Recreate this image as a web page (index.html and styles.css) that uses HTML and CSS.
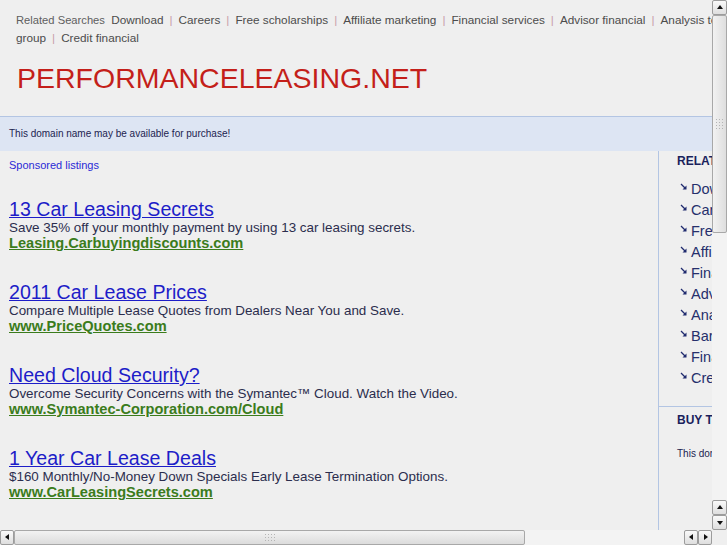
FILE: index.html
```html
<!DOCTYPE html>
<html>
<head>
<meta charset="utf-8">
<title>performanceleasing.net</title>
<link rel="stylesheet" href="styles.css">
</head>
<body>
<div class="screen">
  <div class="viewport">
    <div class="page">
      <div class="related">
        <span class="label">Related Searches</span>
        <a href="#">Download</a><span class="sep">|</span><a href="#">Careers</a><span class="sep">|</span><a href="#">Free scholarships</a><span class="sep">|</span><a href="#">Affiliate marketing</a><span class="sep">|</span><a href="#">Financial services</a><span class="sep">|</span><a href="#">Advisor financial</a><span class="sep">|</span><a href="#">Analysis tools</a><span class="sep">|</span><a href="#">Barclays</a><span class="sep">|</span><a href="#">Financial</a> <a href="#">group</a><span class="sep">|</span><a href="#">Credit financial</a>
      </div>
      <h1 class="domain">PERFORMANCELEASING.NET</h1>
      <div class="band">This domain name may be available for purchase!</div>
      <div class="main">
        <div class="listings">
          <a class="sponsored" href="#">Sponsored listings</a>
          <div class="ads">
            <div class="ad">
              <a class="ad-title" href="#">13 Car Leasing Secrets</a>
              <div class="ad-desc">Save 35% off your monthly payment by using 13 car leasing secrets.</div>
              <a class="ad-url" href="#">Leasing.Carbuyingdiscounts.com</a>
            </div>
            <div class="ad">
              <a class="ad-title" href="#">2011 Car Lease Prices</a>
              <div class="ad-desc">Compare Multiple Lease Quotes from Dealers Near You and Save.</div>
              <a class="ad-url" href="#">www.PriceQuotes.com</a>
            </div>
            <div class="ad">
              <a class="ad-title" href="#">Need Cloud Security?</a>
              <div class="ad-desc">Overcome Security Concerns with the Symantec™ Cloud. Watch the Video.</div>
              <a class="ad-url" href="#">www.Symantec-Corporation.com/Cloud</a>
            </div>
            <div class="ad">
              <a class="ad-title" href="#">1 Year Car Lease Deals</a>
              <div class="ad-desc">$160 Monthly/No-Money Down Specials Early Lease Termination Options.</div>
              <a class="ad-url" href="#">www.CarLeasingSecrets.com</a>
            </div>
          </div>
        </div>
        <div class="sidebar">
          <div class="side-block related-block">
            <h3 class="side-title">RELATED SEARCHES</h3>
            <ul class="side-list">
              <li><svg class="arr" viewBox="0 0 7 7" width="7" height="7"><path d="M1 1 L5 5" stroke="#1f2a6e" stroke-width="1.2"/><path d="M6.5 6.5 L6.5 2.5 L2.5 6.5 Z" fill="#1f2a6e"/></svg><a href="#">Download</a></li>
              <li><svg class="arr" viewBox="0 0 7 7" width="7" height="7"><path d="M1 1 L5 5" stroke="#1f2a6e" stroke-width="1.2"/><path d="M6.5 6.5 L6.5 2.5 L2.5 6.5 Z" fill="#1f2a6e"/></svg><a href="#">Careers</a></li>
              <li><svg class="arr" viewBox="0 0 7 7" width="7" height="7"><path d="M1 1 L5 5" stroke="#1f2a6e" stroke-width="1.2"/><path d="M6.5 6.5 L6.5 2.5 L2.5 6.5 Z" fill="#1f2a6e"/></svg><a href="#">Free scholarships</a></li>
              <li><svg class="arr" viewBox="0 0 7 7" width="7" height="7"><path d="M1 1 L5 5" stroke="#1f2a6e" stroke-width="1.2"/><path d="M6.5 6.5 L6.5 2.5 L2.5 6.5 Z" fill="#1f2a6e"/></svg><a href="#">Affiliate marketing</a></li>
              <li><svg class="arr" viewBox="0 0 7 7" width="7" height="7"><path d="M1 1 L5 5" stroke="#1f2a6e" stroke-width="1.2"/><path d="M6.5 6.5 L6.5 2.5 L2.5 6.5 Z" fill="#1f2a6e"/></svg><a href="#">Financial services</a></li>
              <li><svg class="arr" viewBox="0 0 7 7" width="7" height="7"><path d="M1 1 L5 5" stroke="#1f2a6e" stroke-width="1.2"/><path d="M6.5 6.5 L6.5 2.5 L2.5 6.5 Z" fill="#1f2a6e"/></svg><a href="#">Advisor financial</a></li>
              <li><svg class="arr" viewBox="0 0 7 7" width="7" height="7"><path d="M1 1 L5 5" stroke="#1f2a6e" stroke-width="1.2"/><path d="M6.5 6.5 L6.5 2.5 L2.5 6.5 Z" fill="#1f2a6e"/></svg><a href="#">Analysis tools</a></li>
              <li><svg class="arr" viewBox="0 0 7 7" width="7" height="7"><path d="M1 1 L5 5" stroke="#1f2a6e" stroke-width="1.2"/><path d="M6.5 6.5 L6.5 2.5 L2.5 6.5 Z" fill="#1f2a6e"/></svg><a href="#">Barclays</a></li>
              <li><svg class="arr" viewBox="0 0 7 7" width="7" height="7"><path d="M1 1 L5 5" stroke="#1f2a6e" stroke-width="1.2"/><path d="M6.5 6.5 L6.5 2.5 L2.5 6.5 Z" fill="#1f2a6e"/></svg><a href="#">Financial group</a></li>
              <li><svg class="arr" viewBox="0 0 7 7" width="7" height="7"><path d="M1 1 L5 5" stroke="#1f2a6e" stroke-width="1.2"/><path d="M6.5 6.5 L6.5 2.5 L2.5 6.5 Z" fill="#1f2a6e"/></svg><a href="#">Credit financial</a></li>
            </ul>
          </div>
          <div class="side-block buy-block">
            <h3 class="side-title">BUY THIS DOMAIN</h3>
            <p class="buy-text">This domain may be for sale by its owner!</p>
          </div>
        </div>
      </div>
    </div>
  </div>
  <div class="vbar">
    <div class="sbtn up"></div>
    <div class="thumb vthumb"><span class="grip"></span></div>
    <div class="trough"></div>
    <div class="sbtn up"></div>
    <div class="sbtn down"></div>
  </div>
  <div class="hbar">
    <div class="sbtn left"></div>
    <div class="thumb hthumb"><span class="grip"></span></div>
    <div class="trough"></div>
    <div class="sbtn left"></div>
    <div class="sbtn right"></div>
  </div>
  <div class="corner"></div>
</div>
</body>
</html>
```
FILE: styles.css
```css
html, body {
  margin: 0;
  padding: 0;
  background: #efefef;
}
body {
  font-family: "Liberation Sans", Arial, sans-serif;
}
.screen {
  width: 727px;
  height: 545px;
  display: grid;
  grid-template-columns: 712px 15px;
  grid-template-rows: 530px 15px;
  overflow: hidden;
}
.viewport {
  overflow: hidden;
  background: #efefef;
}
.page {
  width: 960px;
  min-height: 530px;
  background: #efefef;
}

/* related searches header */
.related {
  width: 890px;
  padding: 11px 0 0 16px;
  font-size: 11.75px;
  line-height: 18px;
  color: #505050;
}
.related .label {
  font-size: 11.2px;
  color: #5e5e5e;
  margin-right: 3px;
}
.related a {
  color: #4c4c4c;
  text-decoration: none;
}
.related .sep {
  color: #c9a0ab;
  margin: 0 6px;
}

.domain {
  margin: 15px 0 22px 0;
  padding-left: 17px;
  font-size: 28.5px;
  line-height: 32px;
  font-weight: normal;
  color: #c41f1a;
}

.band {
  border-top: 1px solid #b3c5e3;
  height: 34px;
  line-height: 34px;
  padding-left: 9px;
  background: #dde5f3;
  font-size: 10px;
  color: #1c2350;
}

.main {
  display: flex;
}
.listings {
  width: 649px;
  padding: 7px 0 0 9px;
}
.sponsored {
  display: block;
  font-size: 11px;
  line-height: 14px;
  color: #2a2ad6;
  text-decoration: none;
}
.ads {
  padding-top: 27px;
}
.ad {
  margin-bottom: 30px;
}
.ad-title {
  display: block;
  width: max-content;
  font-size: 19.6px;
  line-height: 21px;
  color: #1d1dc8;
  text-decoration: underline;
}
.ad-desc {
  font-size: 13.4px;
  line-height: 15px;
  color: #2b2d4d;
}
.ad-url {
  display: block;
  width: max-content;
  font-size: 14.6px;
  line-height: 17px;
  font-weight: bold;
  color: #3b7c1c;
  text-decoration: underline;
}

.sidebar {
  flex: 1;
  border-left: 1px solid #b3c5e3;
  min-height: 379px;
}
.side-block {
  padding-left: 18px;
}
.related-block {
  padding-top: 3px;
  padding-bottom: 18px;
}
.side-title {
  margin: 0;
  font-size: 12px;
  line-height: 14px;
  font-weight: bold;
  color: #1a1f5c;
  white-space: nowrap;
}
.side-list {
  list-style: none;
  margin: 10px 0 0 0;
  padding: 0;
}
.side-list li {
  display: flex;
  align-items: center;
  height: 21px;
  white-space: nowrap;
}
.side-list .arr {
  margin: 0 4px 4px 3px;
  flex: none;
}
.side-list a {
  font-size: 14.5px;
  color: #262f6c;
  text-decoration: none;
}
.buy-block {
  border-top: 1px solid #b3c5e3;
  padding-top: 6px;
}
.buy-text {
  margin: 20px 0 0 0;
  font-size: 10px;
  line-height: 14px;
  color: #1c2350;
  white-space: nowrap;
}

/* scrollbars */
.vbar {
  display: flex;
  flex-direction: column;
  background: #ececec;
}
.hbar {
  display: flex;
  background: #ececec;
}
.trough {
  flex: 1;
  background: #f3f3f3;
}
.corner {
  background: #efefef;
}
.sbtn {
  position: relative;
  box-sizing: border-box;
  border: 1px solid #9c9c9c;
  border-radius: 2px;
  background: linear-gradient(#fafafa, #dedede);
}
.vbar .sbtn {
  height: 15px;
  flex: none;
}
.hbar .sbtn {
  width: 14px;
  flex: none;
}
.sbtn::after {
  content: "";
  position: absolute;
  width: 0;
  height: 0;
  border-style: solid;
  border-color: transparent;
}
.sbtn.up::after {
  left: 4px;
  top: 4px;
  border-width: 0 3px 4px 3px;
  border-bottom-color: #111;
}
.sbtn.down::after {
  left: 4px;
  top: 5px;
  border-width: 4px 3px 0 3px;
  border-top-color: #111;
}
.sbtn.left::after {
  left: 4px;
  top: 3px;
  border-width: 3px 4px 3px 0;
  border-right-color: #111;
}
.sbtn.right::after {
  left: 5px;
  top: 3px;
  border-width: 3px 0 3px 4px;
  border-left-color: #111;
}
.thumb {
  position: relative;
  box-sizing: border-box;
  border: 1px solid #a8a8a8;
  border-radius: 2px;
  flex: none;
  display: flex;
  align-items: center;
  justify-content: center;
}
.vthumb {
  height: 218px;
  background: linear-gradient(90deg, #f2f2f2, #dedede);
}
.hthumb {
  width: 511px;
  background: linear-gradient(#f2f2f2, #dcdcdc);
}
.grip {
  display: block;
  background-image: radial-gradient(circle, #b4b4b4 0.8px, transparent 1px);
  background-size: 3px 3px;
}
.vthumb .grip {
  width: 9px;
  height: 12px;
}
.hthumb .grip {
  width: 12px;
  height: 9px;
}
```
